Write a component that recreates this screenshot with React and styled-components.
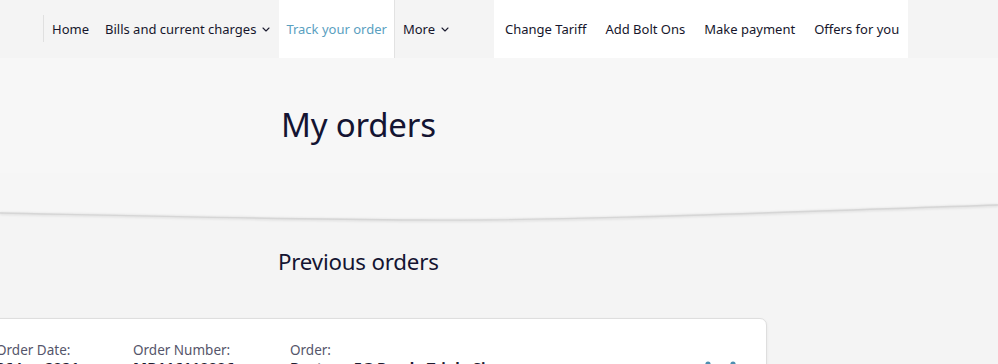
import React from 'react';
import styled, { createGlobalStyle } from 'styled-components';

const GlobalStyle = createGlobalStyle`
  html, body {
    margin: 0;
    padding: 0;
    background: #f4f4f4;
    font-family: "Noto Sans", "Open Sans", Arial, sans-serif;
    color: #1c1c30;
    overflow: hidden;
  }
  * { box-sizing: border-box; }
`;

const Page = styled.div`
  width: 998px;
  height: 364px;
  overflow: hidden;
  background: #f4f4f4;
`;

const Nav = styled.nav`
  height: 58px;
  display: flex;
  align-items: stretch;
  padding-left: 43px;
  background: #f4f4f4;
`;

const Divider = styled.span`
  width: 1px;
  margin: 15px 0 16px;
  background: #e0e0e0;
`;

const NavGroup = styled.div`
  display: flex;
  align-items: stretch;
  gap: ${p => p.$gap || '0'};
  background: ${p => (p.$light ? '#ffffff' : 'transparent')};
  margin: ${p => p.$margin || '0'};
  padding: ${p => p.$padding || '0'};
`;

const NavLink = styled.a`
  display: flex;
  align-items: center;
  gap: 6px;
  padding: ${p => p.$padding || '0'};
  font-size: 13px;
  color: ${p => (p.$active ? '#5aa0bf' : '#16162c')};
  background: ${p => (p.$active ? '#ffffff' : 'transparent')};
  border-right: ${p => (p.$active ? '1px solid #e2e2e2' : 'none')};
  text-decoration: none;
  white-space: nowrap;
  cursor: pointer;
`;

const Chevron = () => (
  <svg width="8" height="5" viewBox="0 0 8 5" fill="none">
    <path d="M1 1l3 3 3-3" stroke="#1c1c30" strokeWidth="1.1" strokeLinecap="round" strokeLinejoin="round" />
  </svg>
);

const Hero = styled.header`
  height: 115px;
  background: #f7f7f7;
  padding: 45px 0 0 281px;
`;

const Title = styled.h1`
  margin: 0;
  font-size: 33px;
  font-weight: 400;
  letter-spacing: -0.2px;
  color: #141432;
  line-height: 44px;
`;

const CurveBand = styled.div`
  height: 60px;
  svg { display: block; }
`;

const Section = styled.section`
  padding-top: 14px;
`;

const SectionTitle = styled.h2`
  margin: 0 0 0 278px;
  font-size: 22.3px;
  font-weight: 400;
  color: #141432;
  line-height: 30px;
  letter-spacing: -0.2px;
`;

const Card = styled.div`
  margin: 41px 0 0 -30px;
  width: 797px;
  height: 80px;
  background: #ffffff;
  border: 1px solid #dedede;
  border-radius: 7px;
  box-shadow: 0 1px 3px rgba(0, 0, 0, 0.06);
  padding: 23px 0 0 25px;
  display: flex;
  align-items: flex-start;
`;

const Field = styled.div`
  width: ${p => p.$width};
  flex-shrink: 0;
  display: flex;
  flex-direction: column;
`;

const Label = styled.span`
  font-size: 13.5px;
  color: #55556a;
  line-height: 16px;
`;

const Value = styled.span`
  font-size: 15px;
  font-weight: 700;
  color: #1c1c30;
  line-height: 19px;
  white-space: nowrap;
`;

const Actions = styled.div`
  margin-left: auto;
  margin-right: 28px;
  margin-top: 17px;
  display: flex;
  gap: 15px;
`;

const ActionIcon = () => (
  <svg width="10" height="10" viewBox="0 0 10 10">
    <circle cx="5" cy="5" r="2.6" fill="#4d8fb0" />
  </svg>
);

export default function App() {
  return (
    <Page>
      <GlobalStyle />
      <Nav>
        <Divider />
        <NavGroup>
          <NavLink $padding="0 16px 0 8px">Home</NavLink>
          <NavLink $padding="0 9px 0 0">Bills and current charges <Chevron /></NavLink>
          <NavLink $active $padding="0 7px">Track your order</NavLink>
          <NavLink $padding="0 9px 0 8px">More <Chevron /></NavLink>
        </NavGroup>
        <NavGroup $light $gap="19px" $margin="0 0 0 36px" $padding="0 9px 0 11px">
          <NavLink>Change Tariff</NavLink>
          <NavLink>Add Bolt Ons</NavLink>
          <NavLink>Make payment</NavLink>
          <NavLink>Offers for you</NavLink>
        </NavGroup>
      </Nav>

      <Hero>
        <Title>My orders</Title>
      </Hero>

      <CurveBand>
        <svg width="998" height="60" viewBox="0 0 998 60">
          <defs>
            <filter id="soft" x="-5%" y="-50%" width="110%" height="200%">
              <feGaussianBlur stdDeviation="1.2" />
            </filter>
          </defs>
          <rect x="0" y="0" width="998" height="60" fill="#f4f4f4" />
          <path d="M0 0 H998 V32 C760 40 560 48 420 47 C260 46 100 42 0 40 Z" fill="#f6f6f6" />
          <path d="M0 40.5 C100 42.5 260 46.5 420 47.5 C560 48.5 760 40.5 998 32.5" stroke="#000" strokeOpacity="0.08" strokeWidth="3" fill="none" filter="url(#soft)" />
          <path d="M0 40 C100 42 260 46 420 47 C560 48 760 40 998 32" stroke="#d6d6d6" strokeWidth="1.4" fill="none" />
        </svg>
      </CurveBand>

      <Section>
        <SectionTitle>Previous orders</SectionTitle>
        <Card>
          <Field $width="137px">
            <Label>Order Date:</Label>
            <Value>26 Jan 2021</Value>
          </Field>
          <Field $width="157px">
            <Label>Order Number:</Label>
            <Value>MR116110006</Value>
          </Field>
          <Field $width="300px">
            <Label>Order:</Label>
            <Value>Postpay 5G Ready Triple Sim</Value>
          </Field>
          <Actions>
            <ActionIcon />
            <ActionIcon />
          </Actions>
        </Card>
      </Section>
    </Page>
  );
}
